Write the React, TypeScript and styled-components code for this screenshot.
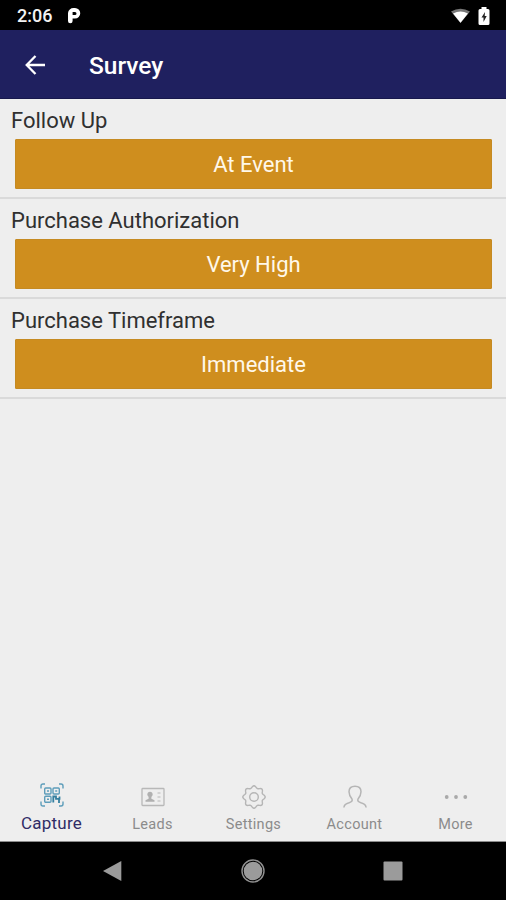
import React from 'react';
import styled, { createGlobalStyle } from 'styled-components';

const GlobalStyle = createGlobalStyle`
  * { box-sizing: border-box; }
  html, body { margin: 0; padding: 0; }
  body { font-family: Roboto, sans-serif; background: #eeeeee; overflow: hidden; }
  svg { display: block; flex: none; }
`;

const Screen = styled.div`
  width: 506px;
  height: 900px;
  display: flex;
  flex-direction: column;
  background: #eeeeee;
`;

const StatusBar = styled.div`
  height: 30px;
  flex: none;
  display: flex;
  align-items: center;
  padding: 1px 16px 0 17px;
  background: #000;
  color: #f2f2f2;
`;

const Clock = styled.span`
  width: 50px;
  font-size: 18px;
  font-weight: 500;
  line-height: 28px;
  white-space: nowrap;
`;

const StatusIcons = styled.div`
  margin-left: auto;
  display: flex;
  align-items: center;
  gap: 8px;
`;

const Header = styled.header`
  height: 69px;
  flex: none;
  display: flex;
  align-items: center;
  padding: 1px 0 0 25px;
  background: #1f205f;
  border-bottom: 1px solid #17184c;
  color: #fff;
`;

const Title = styled.h1`
  margin: 2px 0 0 43px;
  font-size: 24.5px;
  font-weight: 500;
  line-height: 32px;
`;

const Questions = styled.main`
  flex: 1;
  display: flex;
  flex-direction: column;
`;

const Question = styled.section`
  height: 100.1px;
  flex: none;
  padding: 7px 14px 0 11px;
  border-bottom: 2px solid #dadada;
`;

const Label = styled.div`
  height: 33px;
  font-size: 22px;
  font-weight: 400;
  line-height: 30px;
  color: #303030;
`;

const Answer = styled.button`
  display: flex;
  align-items: center;
  justify-content: center;
  width: 477px;
  height: 50px;
  margin: 0 0 0 4px;
  padding: 2px 0 0;
  border: 1px solid #c58a22;
  border-radius: 1px;
  background: #cf8e1e;
  color: #fff8ea;
  font: 400 22px/28px Roboto, sans-serif;
`;

const TabBar = styled.nav`
  height: 66px;
  flex: none;
  display: grid;
  grid-template-columns: repeat(5, 1fr);
  padding-left: 1px;
  border-bottom: 1px solid #8b8b8b;
`;

const Tab = styled.div<{ $active?: boolean }>`
  display: flex;
  flex-direction: column;
  align-items: center;
  padding-top: ${({ $active }) => ($active ? '7px' : '9px')};
  gap: 4px;
  color: ${({ $active }) => ($active ? '#302c66' : '#8b8b8b')};
  font-size: ${({ $active }) => ($active ? '17px' : '14.5px')};
  line-height: 24px;
  letter-spacing: ${({ $active }) => ($active ? '0.2px' : '0.3px')};
`;

const SystemNav = styled.div`
  height: 58px;
  flex: none;
  display: flex;
  justify-content: space-between;
  align-items: center;
  padding: 0 103px 0 102px;
  background: #000;
`;

const questions = [
  { label: 'Follow Up', answer: 'At Event' },
  { label: 'Purchase Authorization', answer: 'Very High' },
  { label: 'Purchase Timeframe', answer: 'Immediate' },
];

const ParkingIcon = () => (
  <svg width="14" height="17" viewBox="0 0 14 17">
    <path fill="#fff" fillRule="evenodd" d="M1 6a5.5 5.5 0 0 1 5.5-5H8a5 5 0 0 1 0 10.5H5.6V14a2.3 2.3 0 0 1-4.6 0zM5.600 5v3H8a1.500 1.500 0 0 0 0-3z" />
  </svg>
);

const WifiIcon = () => (
  <svg width="19" height="15" viewBox="0 0 20 15" preserveAspectRatio="none">
    <path fill="#777" d="M0 3.5Q10-2 20 3.5L10 15z" />
    <path fill="#fff" d="M2.2 5.6Q10 1.2 17.8 5.6L10 14.8z" />
  </svg>
);

const BatteryIcon = () => (
  <svg width="12" height="18" viewBox="0 0 12 18">
    <path fill="#fff" d="M3.5 0h5v2H10a1.5 1.5 0 0 1 1.5 1.5v13A1.5 1.5 0 0 1 10 18H2A1.5 1.5 0 0 1 .5 16.5v-13A1.5 1.5 0 0 1 2 2h1.5z" />
    <path fill="#222" d="M7 5L3.5 10.5h2V15L8.7 9h-2z" />
  </svg>
);

const BackIcon = () => (
  <svg width="21" height="20" viewBox="0 0 21 20" fill="none" stroke="#fff" strokeWidth="2.3">
    <path d="M20 10H2M10.5 1L1.7 10l8.8 9" />
  </svg>
);

const CaptureIcon = () => (
  <svg width="24" height="24" viewBox="0 0 24 24" fill="none" stroke="#5d9dba" strokeWidth="1.4">
    <path d="M1 5.5V3q0-2 2-2h2M19 1h2q2 0 2 2v2.5M23 18.5V21q0 2-2 2h-2M5 23H3q-2 0-2-2v-2.5" />
    <rect x="4.7" y="5" width="6.3" height="6" rx="1" />
    <rect x="13" y="5" width="6.3" height="6" rx="1" />
    <rect x="4.7" y="13.2" width="6.3" height="6" rx="1" />
    <path d="M7 8h2M15.2 8h2M7 16.2h2" />
    <path d="M13.3 19.5v-6h2.7v2.300h3.500V13.500M19 15v5" stroke="#347f9f" strokeWidth="1.8" />
  </svg>
);

const LeadsIcon = () => (
  <svg width="24" height="24" viewBox="0 0 24 24" fill="none" stroke="#b8b8b8" strokeWidth="1.3">
    <rect x="1" y="3.5" width="22" height="17" rx=".7" />
    <circle cx="9" cy="9.3" r="2.6" fill="#b0b0b0" stroke="none" />
    <path d="M4.5 16.8v-1.5l3.1-1.5V11h2.8v2.8l3.1 1.5v1.5z" fill="#b0b0b0" stroke="none" />
    <path d="M16.5 8h3M16.5 12h3M16.5 16h3" strokeWidth="1" />
  </svg>
);

// Eight rounded teeth, sampled around a circle with a cosine ripple.
const gearPoints = Array.from({ length: 96 }, (_, i) => {
  const angle = (i / 96) * Math.PI * 2;
  const radius = 10.1 + Math.cos(angle * 8) * 1.1;
  return `${(12 + radius * Math.sin(angle)).toFixed(2)},${(12 - radius * Math.cos(angle)).toFixed(2)}`;
}).join(' ');

const SettingsIcon = () => (
  <svg width="24" height="24" viewBox="0 0 24 24" fill="none" stroke="#b5b5b5" strokeWidth="1.4">
    <polygon points={gearPoints} />
    <circle cx="12" cy="12" r="4.3" />
  </svg>
);

const AccountIcon = () => (
  <svg width="24" height="24" viewBox="0 0 24 24" fill="none" stroke="#b5b5b5" strokeWidth="1.5">
    <path d="M.9 22.5c.3-3.3 2.6-4 5.1-4.7 2.3-.7 3.8-1.1 3.1-3.5C7.2 12 6 9.5 6 6.8 6 3.1 8.4 1.2 12 1.2s6 1.9 6 5.6c0 2.7-1.2 5.2-3.1 7.5-.7 2.4.8 2.8 3.1 3.5 2.5.7 4.8 1.4 5.1 4.7" />
  </svg>
);

const MoreIcon = () => (
  <svg width="24" height="24" viewBox="0 0 24 24" fill="#a9a9a9">
    <circle cx="2.7" cy="12" r="1.9" />
    <circle cx="12" cy="12" r="1.9" />
    <circle cx="21.3" cy="12" r="1.9" />
  </svg>
);

const NavBackIcon = () => (
  <svg width="20" height="22" viewBox="0 0 20 22">
    <path fill="#9b9b9b" d="M19.300 1v20L1 11z" />
  </svg>
);

const NavHomeIcon = () => (
  <svg width="24" height="24" viewBox="0 0 24 24">
    <circle cx="12" cy="12" r="11" fill="none" stroke="#929292" strokeWidth="1.4" />
    <circle cx="12" cy="12" r="9.3" fill="#9b9b9b" />
  </svg>
);

const NavRecentsIcon = () => (
  <svg width="20" height="20" viewBox="0 0 20 20">
    <rect x=".5" y=".5" width="19" height="19" rx="1" fill="#9b9b9b" />
  </svg>
);

export default function App() {
  return (
    <>
      <GlobalStyle />
      <Screen>
        <StatusBar>
          <Clock>2:06</Clock>
          <ParkingIcon />
          <StatusIcons>
            <WifiIcon />
            <BatteryIcon />
          </StatusIcons>
        </StatusBar>
        <Header>
          <BackIcon />
          <Title>Survey</Title>
        </Header>
        <Questions>
          {questions.map(({ label, answer }) => (
            <Question key={label}>
              <Label>{label}</Label>
              <Answer>{answer}</Answer>
            </Question>
          ))}
        </Questions>
        <TabBar>
          <Tab $active><CaptureIcon />Capture</Tab>
          <Tab><LeadsIcon />Leads</Tab>
          <Tab><SettingsIcon />Settings</Tab>
          <Tab><AccountIcon />Account</Tab>
          <Tab><MoreIcon />More</Tab>
        </TabBar>
        <SystemNav>
          <NavBackIcon />
          <NavHomeIcon />
          <NavRecentsIcon />
        </SystemNav>
      </Screen>
    </>
  );
}
